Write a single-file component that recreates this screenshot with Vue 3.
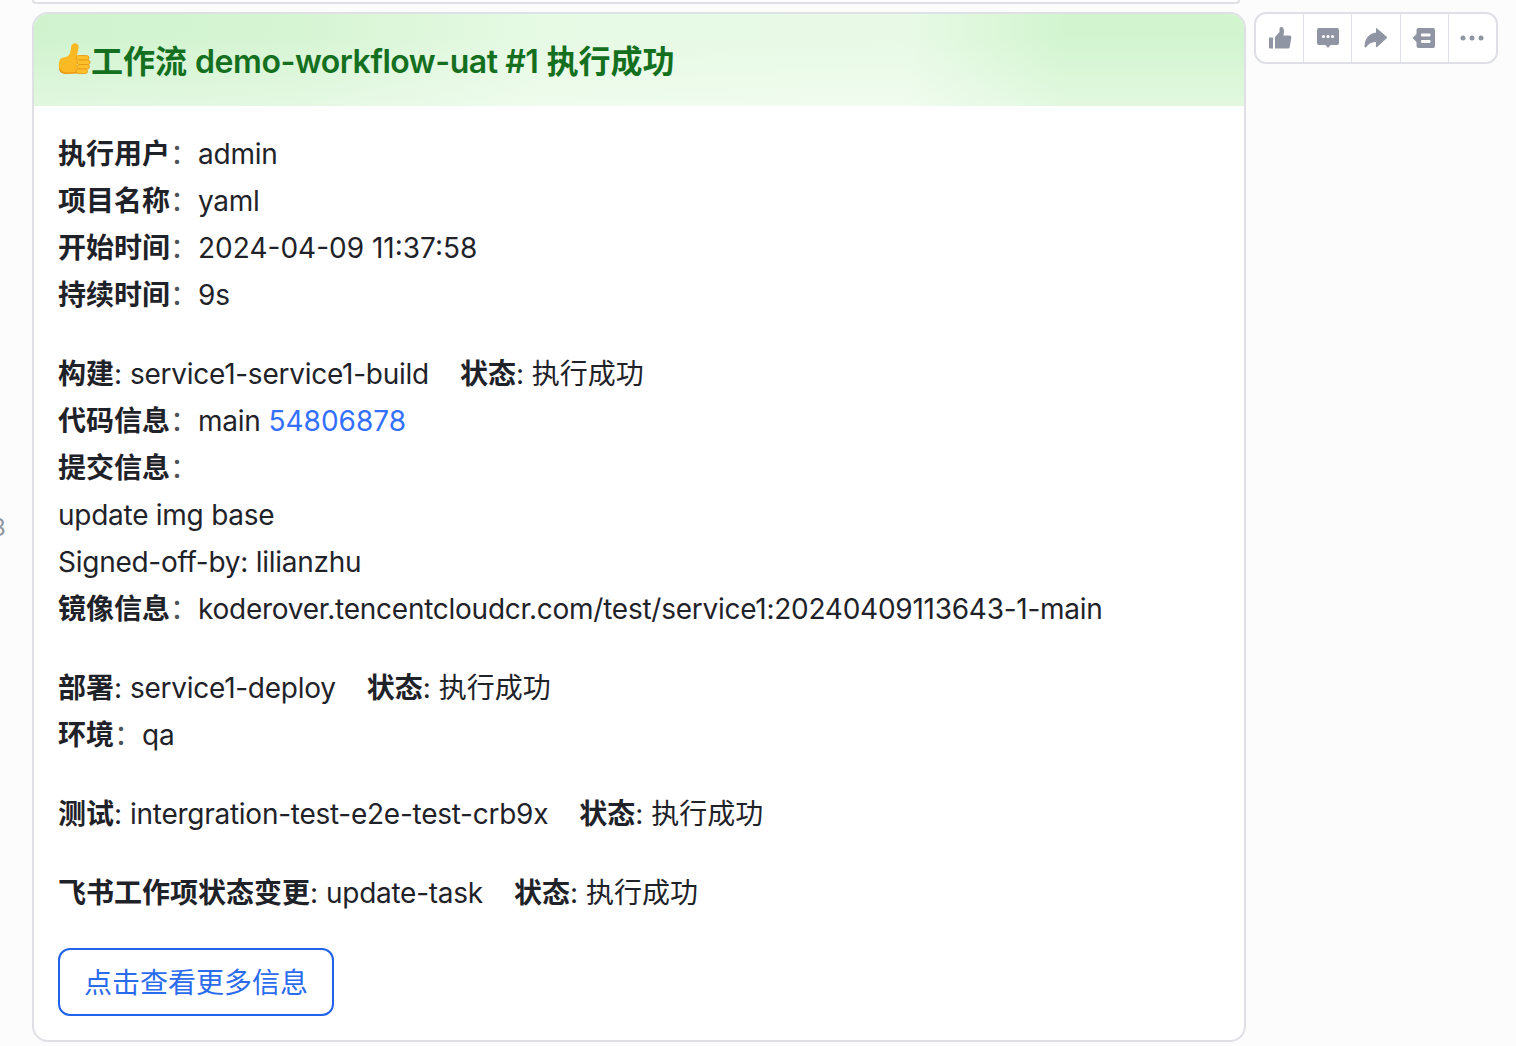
<script setup>
const meta = [
  { label: '执行用户', value: 'admin' },
  { label: '项目名称', value: 'yaml' },
  { label: '开始时间', value: '2024-04-09 11:37:58', numeric: true },
  { label: '持续时间', value: '9s' },
]
</script>

<template>
  <div class="page">
    <span class="edge-num">3</span>
    <div class="prev-card"></div>
    <div class="row">
      <article class="card">
        <header class="head">
          <svg class="emoji" viewBox="0 0 33 33" aria-hidden="true">
            <path d="M14 1.500C16-.5 20 0 20.500 3c.5 3-1 6-1.500 9.500V30l-10 .5c-5 0-7.500-1.500-8-5.500-.5-4 0-8 2-9.500 2-1.500 6-1 8-3.500 2-2.500 1.500-8 3-10.500z" fill="#fbb924"/>
            <path d="M2 25c1 3 3.500 4.500 7 4.500l10-.5v1.500l-10 .5c-5 0-7.500-1.500-8-5.500z" fill="#ea9a12"/>
            <rect x="18" y="12.500" width="13" height="4.600" rx="2.300" fill="#fcc02c" stroke="#e8950f" stroke-width=".8"/>
            <rect x="19" y="17" width="13" height="4.600" rx="2.300" fill="#fcc02c" stroke="#e8950f" stroke-width=".8"/>
            <rect x="19" y="21.500" width="12.500" height="4.600" rx="2.300" fill="#fcc02c" stroke="#e8950f" stroke-width=".8"/>
            <rect x="18" y="26" width="11.500" height="4.600" rx="2.300" fill="#fcc02c" stroke="#e8950f" stroke-width=".8"/>
          </svg>
          <h1 class="title">工作流 <span class="title-latin">demo-workflow-uat #1</span> 执行成功</h1>
        </header>
        <div class="body">
          <section class="block">
            <p v-for="m in meta" :key="m.label" class="line">
              <b>{{ m.label }}</b><span class="colon">：</span><span :class="m.numeric ? 'num' : 'v'">{{ m.value }}</span>
            </p>
          </section>
          <section class="block">
            <p class="line"><b>构建</b>: <span class="v">service1-service1-build</span><b class="status">状态</b>: 执行成功</p>
            <p class="line"><b>代码信息</b><span class="colon">：</span><span class="v">main</span> <a class="link">54806878</a></p>
            <p class="line"><b>提交信息</b><span class="colon">：</span></p>
            <p class="line"><span class="v">update img base</span></p>
            <p class="line"><span class="v">Signed-off-by: lilianzhu</span></p>
            <p class="line"><b>镜像信息</b><span class="colon">：</span><span class="v">koderover.tencentcloudcr.com/test/service1:20240409113643-1-main</span></p>
          </section>
          <section class="block">
            <p class="line"><b>部署</b>: <span class="v">service1-deploy</span><b class="status">状态</b>: 执行成功</p>
            <p class="line"><b>环境</b><span class="colon">：</span><span class="v">qa</span></p>
          </section>
          <section class="block">
            <p class="line"><b>测试</b>: <span class="v">intergration-test-e2e-test-crb9x</span><b class="status">状态</b>: 执行成功</p>
          </section>
          <section class="block">
            <p class="line"><b>飞书工作项状态变更</b>: <span class="v">update-task</span><b class="status">状态</b>: 执行成功</p>
          </section>
          <button class="more" type="button">点击查看更多信息</button>
        </div>
      </article>
      <div class="toolbar">
        <div class="tool">
          <svg viewBox="0 0 24 24" class="ico"><path d="M1 12.500a1 1 0 0 1 1-1h3v11H2a1 1 0 0 1-1-1zM7 22.500V11l4.500-5V3c0-1 .7-2 1.800-2C15.500 1 16 3.500 16 5.500c0 1.300-.3 2.800-.7 4H21.500c1.100 0 2 .9 1.800 2.200l-1.500 9c-.2 1-1 1.800-2 1.800z" fill="#8f95a3"/></svg>
        </div>
        <div class="tool">
          <svg viewBox="0 0 24 24" class="ico"><path d="M3 2h18a2 2 0 0 1 2 2v13a2 2 0 0 1-2 2h-6.500L12 22l-2.500-3H3a2 2 0 0 1-2-2V4a2 2 0 0 1 2-2z" fill="#8f95a3"/><circle cx="7.500" cy="10.500" r="1.600" fill="#fff"/><circle cx="12" cy="10.500" r="1.600" fill="#fff"/><circle cx="16.500" cy="10.500" r="1.600" fill="#fff"/></svg>
        </div>
        <div class="tool">
          <svg viewBox="0 0 24 24" class="ico"><path d="M12.500 2.500 23 11.500l-10.500 9.500v-5.500C8 15.500 4.500 17 2 21H1C1 13 5 7.500 12.500 7z" fill="#8f95a3" stroke="#8f95a3" stroke-width="1" stroke-linejoin="round"/></svg>
        </div>
        <div class="tool">
          <svg viewBox="0 0 24 24" class="ico"><path d="M6.500 2H21a2 2 0 0 1 2 2v16a2 2 0 0 1-2 2H6.500a2 2 0 0 1-2-2v-4L.5 12l4-4V4a2 2 0 0 1 2-2z" fill="#8f95a3"/><rect x="9" y="7.500" width="9.500" height="3" rx="1" fill="#fff"/><rect x="9" y="14" width="9.500" height="3" rx="1" fill="#fff"/></svg>
        </div>
        <div class="tool">
          <svg viewBox="0 0 24 24" class="ico"><circle cx="3" cy="12" r="2.500" fill="#8f95a3"/><circle cx="12" cy="12" r="2.500" fill="#8f95a3"/><circle cx="21" cy="12" r="2.500" fill="#8f95a3"/></svg>
        </div>
      </div>
    </div>
  </div>
</template>

<style>
html, body { margin: 0; background: #fcfcfd; overflow: hidden; }
</style>

<style scoped>
.page {
  position: relative;
  height: 1046px;
  padding-left: 32px;
  box-sizing: border-box;
  font-family: Inter, "Noto Sans CJK SC", sans-serif;
  color: #1f2329;
  overflow: hidden;
}
.edge-num {
  position: absolute;
  left: -9px;
  top: 511px;
  font-size: 24px;
  line-height: 34px;
  color: #8f959e;
}
.prev-card {
  width: 1208px;
  height: 4px;
  box-sizing: border-box;
  background: #fff;
  border: 2px solid #dfe0e6;
  border-top: none;
  border-radius: 0 0 12px 12px;
}
.row {
  display: flex;
  align-items: flex-start;
  gap: 8px;
  margin-top: 8px;
}
.card {
  width: 1214px;
  height: 1030px;
  box-sizing: border-box;
  flex: none;
  background: #fff;
  border: 2px solid #dfe0e6;
  border-radius: 16px;
  overflow: hidden;
}
.head {
  height: 93px;
  box-sizing: border-box;
  margin-top: -1px;
  padding: 4px 24px 0;
  display: flex;
  align-items: center;
  background:
    linear-gradient(to bottom, rgba(255, 255, 255, 0) 25%, rgba(255, 255, 255, 0.35) 100%),
    linear-gradient(90deg, #d0f3ce 0%, #d6f5d3 22%, #e6fae4 42%, #e8fae6 72%, #d2f5cf 85%, #d2f5cf 100%);
}
.emoji { width: 33px; height: 33px; flex: none; margin-top: -4px; }
.title {
  margin: 0;
  font-size: 32px;
  line-height: 44px;
  font-weight: 600;
  color: #14701f;
  white-space: nowrap;
}
.title-latin { letter-spacing: -0.45px; }
.body { padding: 25px 24px 0; }
.block { margin-bottom: 32px; }
.line {
  margin: 0;
  font-size: 28px;
  line-height: 47px;
  height: 47px;
  white-space: nowrap;
}
.line b { font-weight: 600; }
.v { letter-spacing: -0.26px; }
.num { letter-spacing: 0; }
.colon { font-weight: 400; color: #4e5358; }
.status { margin-left: 31px; }
.link { color: #3370ff; }
.more {
  display: block;
  width: 276px;
  height: 68px;
  margin-top: -1px;
  padding: 0 0 2px;
  background: #fff;
  border: 2px solid #1f63ea;
  border-radius: 12px;
  font-family: inherit;
  font-size: 28px;
  color: #2b6bee;
}
.toolbar {
  display: flex;
  width: 244px;
  height: 52px;
  box-sizing: border-box;
  background: #fff;
  border: 2px solid #dfe0e6;
  border-radius: 12px;
  overflow: hidden;
}
.tool {
  flex: 1;
  display: flex;
  align-items: center;
  justify-content: center;
  border-left: 1px solid #dfe0e6;
}
.tool:first-child { border-left: none; }
.ico { width: 24px; height: 24px; }
</style>
